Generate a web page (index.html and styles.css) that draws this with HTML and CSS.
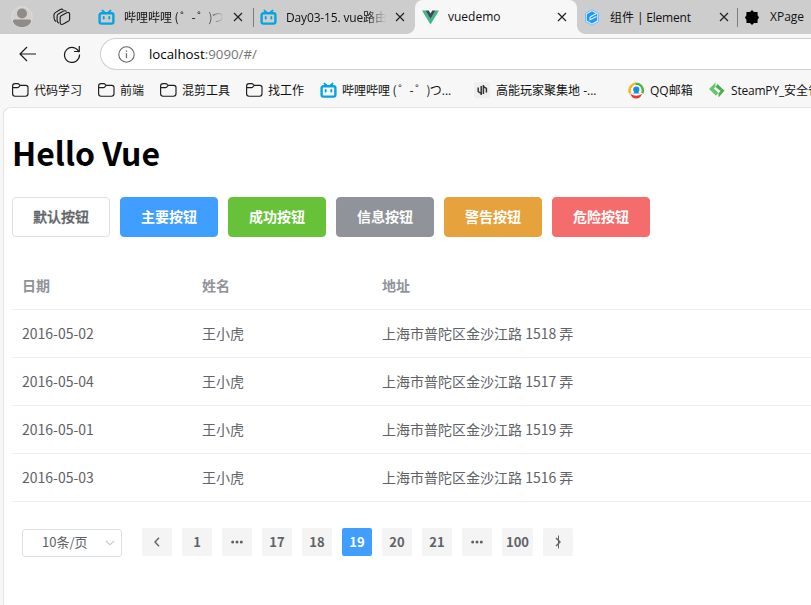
FILE: index.html
```html
<!DOCTYPE html>
<html lang="zh-CN">
<head>
<meta charset="utf-8">
<title>vuedemo</title>
<link rel="stylesheet" href="styles.css">
</head>
<body>
<svg width="0" height="0" class="defs">
  <symbol id="bili" viewBox="0 0 17 17"><path d="M4.500 1.600 6.500 3.500M12.500 1.600 10.500 3.500" stroke="#06a4de" stroke-width="2" stroke-linecap="round"/><rect x="1.600" y="4.200" width="13.800" height="10.400" rx="1.800" fill="none" stroke="#06a4de" stroke-width="2.400"/><path d="M5.700 8v1.500M11.300 8v1.500" stroke="#06a4de" stroke-width="1.900" stroke-linecap="round"/></symbol>
  <symbol id="close" viewBox="0 0 10 10"><path d="M1 1l8 8M9 1L1 9" stroke="#222" stroke-width="1.200" fill="none"/></symbol>
  <symbol id="folder" viewBox="0 0 17 16"><path d="M.6 4.200q0-2.600 2.400-2.600h2.600q1 0 1.600.7l1 1h5.600q2.200 0 2.200 2.200v6.300q0 2.400-2.400 2.400H3Q.6 14.200.6 11.800zM.6 5.600h4.800q.9 0 1.500-.8l1.300-1.500" fill="none" stroke="#1d1d1d" stroke-width="1.150"/></symbol>
</svg>
<header class="browser">
  <div class="tabs">
    <div class="lead">
      <svg class="avatar" width="22" height="22" viewBox="0 0 22 22"><circle cx="11" cy="11" r="10.300" fill="#d3d1cf" stroke="#dedcda"/><circle cx="11" cy="7.500" r="5" fill="#8f8b88"/><path d="M1.800 15.500q0-2 2-2h14.400q2 0 2 2a10.300 10.300 0 0 1-18.400 0z" fill="#8f8b88"/></svg>
      <svg class="work" width="18" height="18" viewBox="0 0 18 18"><g fill="#cdcdcd" stroke="#1b1b1b" stroke-width="1.100" stroke-linejoin="round"><path d="M3.300 13.500Q1.300 12.500 1.100 10.500L.9 7.200Q.9 5.500 2.300 4.600L7.300 1.500Q9 .7 10.300 1.600" fill="none"/><path d="M6 15.300Q4.200 14.300 4.100 12.500V8.200Q4.100 6.800 5.300 6L10.500 3.100Q12.300 2.300 13.600 3.400" fill="none"/><path d="M7.200 9.300q0-1 1-1.600l5.500-2.900q2.800-1 2.900 1.300v5.200q0 1.200-1 1.800l-5.300 3q-3 1.200-3.100-1.400z"/></g></svg>
    </div>
    <div class="tab"><svg class="fav" width="17" height="17"><use href="#bili"/></svg><span class="t fade">哔哩哔哩<span class="face"> ( ゜- ゜)</span>つ</span><svg class="x" width="10" height="10"><use href="#close"/></svg></div>
    <div class="tab line"><svg class="fav" width="17" height="17"><use href="#bili"/></svg><span class="t fade"><span class="lat day">Day03-15. vue</span>路由</span><svg class="x" width="10" height="10"><use href="#close"/></svg></div>
    <div class="tab active"><svg class="fav" width="17" height="17" viewBox="0 0 17 17"><path d="M0 1.500h3.500l5 8.500 5-8.500H17L8.500 15.500z" fill="#41b883"/><path d="M3.500 1.500h3.200l1.800 3 1.800-3h3.200l-5 8.500z" fill="#35495e"/></svg><span class="t lat">vuedemo</span><svg class="x" width="10" height="10"><use href="#close"/></svg></div>
    <div class="tab"><svg class="fav" width="17" height="17" viewBox="0 0 17 17"><path d="M8 .8l6.500 3.700v8L8 16.200l-6.500-3.700v-8z" fill="#e3f3ff" stroke="#58b5ff" stroke-width=".8"/><path d="M8 2.300l5.200 3v6.200L8 14.500l-5.200-3V5.300z" fill="#2096f8"/><path d="M6 8l6.500-3.400M6 8v2.800l6.500-3.400" stroke="#e3f3ff" stroke-width="1.100" fill="none"/></svg><span class="t">组件<span class="lat tight"> | Element</span></span><svg class="x" width="10" height="10"><use href="#close"/></svg></div>
    <div class="tab line last"><svg class="fav" width="17" height="17" viewBox="0 0 17 17"><path d="M7 1l2 2h3.500l.1 3.300L14 8.500l-1.400 2.200-.1 3.300H9l-2 2-2-2H1.500l-.1-3.300L0 8.500l1.400-2.200L1.500 3H5z" fill="#000"/></svg><span class="t lat">XPage</span></div>
  </div>
  <div class="nav">
    <svg class="back" width="18" height="16" viewBox="0 0 18 16"><path d="M8 1L1 8l7 7M1 8h16" fill="none" stroke="#1b1b1b" stroke-width="1.200"/></svg>
    <svg class="reload" width="18" height="18" viewBox="0 0 18 18"><path d="M16 7.200A7.500 7.500 0 1 0 16.500 9.500M16.300 1v5.500H11" fill="none" stroke="#1b1b1b" stroke-width="1.200"/></svg>
    <div class="address"><svg width="17" height="17" viewBox="0 0 17 17"><circle cx="8.500" cy="8.500" r="7.700" fill="none" stroke="#666" stroke-width="1.100"/><path d="M8.500 7.300v5M8.500 4.500v1.300" stroke="#666" stroke-width="1.200"/></svg><span class="url">localhost<span class="dim">:9090/#/</span></span></div>
  </div>
  <nav class="marks">
    <a class="w70"><svg width="17" height="16"><use href="#folder"/></svg>代码学习</a>
    <a class="w46"><svg width="17" height="16"><use href="#folder"/></svg>前端</a>
    <a class="w70"><svg width="17" height="16"><use href="#folder"/></svg>混剪工具</a>
    <a class="w58"><svg width="17" height="16"><use href="#folder"/></svg>找工作</a>
    <a class="w138"><svg width="17" height="17"><use href="#bili"/></svg><span>哔哩哔哩<span class="face"> ( ゜- ゜)</span>つ<span class="lat">...</span></span></a>
    <a class="w138"><svg width="17" height="16" viewBox="0 0 17 16"><rect width="16" height="16" rx="3" fill="#efefef"/><path d="M7.200 4v9M7.200 11.500L4.200 9.500V5.500M9.400 12V3M9.400 4.500l3 2v4" fill="none" stroke="#333" stroke-width="1.500"/></svg><span>高能玩家聚集地<span class="lat"> -...</span></span></a>
    <a class="w65"><svg width="17" height="17" viewBox="0 0 17 17"><path d="M2.200 11.500A7 7 0 0 1 7.500 1.700" fill="none" stroke="#f8b51c" stroke-width="2.600"/><path d="M7.500 1.700a7 7 0 0 1 6.800 9.500" fill="none" stroke="#57b33b" stroke-width="2.600"/><path d="M2.200 11.700q6 4 12 0l-2 3.500q-4 2.400-8 0z" fill="#e83a22"/><circle cx="8.300" cy="8" r="5" fill="#fff"/><circle cx="8.300" cy="7.600" r="3.100" fill="#168ce0"/><path d="M4.800 11.500q3.500-4 7 0z" fill="#168ce0"/></svg><span><span class="lat">QQ</span>邮箱</span></a>
    <a><svg width="17" height="16" viewBox="0 0 17 16"><path d="M6.500.5v4.300L4.800 6.600l4.700 4.300-2.500 2.800L0 7z" fill="#6bc46d"/><path d="M8.500 2L15.500 8.800 9.500 15.500v-4.200l2-2.200L6.500 5z" fill="#4cae50"/></svg><span><span class="lat tight">SteamPY_</span>安全省</span></a>
  </nav>
</header>
<main class="page">
  <h1>Hello Vue</h1>
  <div class="buttons">
    <button class="btn">默认按钮</button>
    <button class="btn primary">主要按钮</button>
    <button class="btn success">成功按钮</button>
    <button class="btn info">信息按钮</button>
    <button class="btn warning">警告按钮</button>
    <button class="btn danger">危险按钮</button>
  </div>
  <div class="table">
    <div class="row head"><span>日期</span><span>姓名</span><span>地址</span></div>
    <div class="row"><span>2016-05-02</span><span>王小虎</span><span>上海市普陀区金沙江路 1518 弄</span></div>
    <div class="row"><span>2016-05-04</span><span>王小虎</span><span>上海市普陀区金沙江路 1517 弄</span></div>
    <div class="row"><span>2016-05-01</span><span>王小虎</span><span>上海市普陀区金沙江路 1519 弄</span></div>
    <div class="row"><span>2016-05-03</span><span>王小虎</span><span>上海市普陀区金沙江路 1516 弄</span></div>
  </div>
  <div class="pager">
    <div class="size"><span>10条/页</span><svg width="10" height="6" viewBox="0 0 10 6"><path d="M1 .8l4 4 4-4" fill="none" stroke="#c0c4cc" stroke-width="1.100"/></svg></div>
    <div class="p"><svg width="8" height="10" viewBox="0 0 8 10"><path d="M6 .8L2 5l4 4.200" fill="none" stroke="#606266" stroke-width="1.400"/></svg></div>
    <div class="p">1</div>
    <div class="p"><svg width="14" height="4" viewBox="0 0 14 4"><g fill="#606266"><circle cx="2.700" cy="2" r="1.500"/><circle cx="7" cy="2" r="1.500"/><circle cx="11.300" cy="2" r="1.500"/></g></svg></div>
    <div class="p">17</div>
    <div class="p">18</div>
    <div class="p on">19</div>
    <div class="p">20</div>
    <div class="p">21</div>
    <div class="p"><svg width="14" height="4" viewBox="0 0 14 4"><g fill="#606266"><circle cx="2.700" cy="2" r="1.500"/><circle cx="7" cy="2" r="1.500"/><circle cx="11.300" cy="2" r="1.500"/></g></svg></div>
    <div class="p wide">100</div>
    <div class="p"><svg width="8" height="14" viewBox="0 0 8 14"><path d="M2 3l4 4-4 4" fill="none" stroke="#606266" stroke-width="1.400"/><path d="M4.500.5v13" stroke="#606266" stroke-width="1" fill="none"/></svg></div>
  </div>
</main>
</body>
</html>
```
FILE: styles.css
```css
* { box-sizing: border-box; }
body {
  margin: 0;
  width: 811px;
  height: 605px;
  overflow: hidden;
  background: #f7f7f7;
  font-family: "Noto Sans CJK SC", sans-serif;
}
svg { flex: none; display: block; }
.defs { position: absolute; }
.lat { font-family: "Open Sans", sans-serif; }
.tight { letter-spacing: -0.2px; }
.day { letter-spacing: -0.15px; }
.face { letter-spacing: -0.8px; word-spacing: 0.6px; }
.browser { height: 108px; color: #111; font-size: 12px; overflow: hidden; }
.tabs { display: flex; height: 34px; background: #cdcdcd; overflow: hidden; }
.lead { width: 91px; flex: none; display: flex; align-items: center; padding-left: 11px; }
.work { margin-left: 20px; }
.tab { width: 162px; flex: none; display: flex; align-items: center; padding-left: 7px; position: relative; }
.tab.last { width: 74px; padding-left: 6px; }
.tab .t { margin-left: 9px; width: 100px; overflow: hidden; white-space: pre; line-height: 20px; }
.tab .x { margin-left: 9px; }
.tab.last .t { width: 41px; margin-left: 8px; }
.fade { -webkit-mask-image: linear-gradient(to right, #000 80%, transparent); mask-image: linear-gradient(to right, #000 80%, transparent); }
.line::before { content: ""; position: absolute; left: 0; top: 8px; width: 1px; height: 19px; background: #7c7c7c; }
.last::before { left: -2px; }
.active { background: #f7f7f7; border-radius: 8px 8px 0 0; }
.active::before, .active::after { content: ""; position: absolute; bottom: 0; width: 8px; height: 8px; }
.active::before { left: -8px; background: radial-gradient(circle at 0 0, transparent 7.5px, #f7f7f7 8px); }
.active::after { right: -8px; background: radial-gradient(circle at 100% 0, transparent 7.5px, #f7f7f7 8px); }
.nav { display: flex; align-items: center; height: 40px; padding-left: 19px; }
.reload { margin-left: 26px; }
.address {
  display: flex; align-items: center; flex: 1; margin-left: 19px; height: 32px;
  padding-left: 17px; border: 1px solid #cfcfcf; border-right: 0;
  border-radius: 16px 0 0 16px; background: #fff;
}
.url { margin-left: 14px; font: 13.3px/20px "Open Sans", sans-serif; color: #000; }
.dim { color: #757575; }
.marks { display: flex; gap: 16px; padding-left: 12px; height: 32px; align-items: center; white-space: pre; }
.marks a { display: flex; align-items: center; gap: 5px; flex: none; line-height: 20px; }
.w46 { width: 46px; }
.w58 { width: 58px; }
.w65 { width: 65px; }
.w70 { width: 70px; }
.w138 { width: 138px; }
.page {
  margin-left: 3px; height: 498px; margin-top: -1px; padding: 0 0 0 8px; background: #fff;
  border: 1px solid #e4e4e4; border-width: 1px 0 0 1px; border-radius: 8px 0 0 0;
  position: relative;
}
h1 { margin: 20px 0 0; font-size: 32px; line-height: 48px; color: #000; }
.buttons { display: flex; gap: 10px; margin-top: 21px; }
.btn {
  width: 98px; height: 40px; padding: 0 0 2px; border: 1px solid #dcdfe6; border-radius: 4px;
  background: #fff; color: #606266; font: 500 14px/14px "Noto Sans CJK SC", sans-serif;
  -webkit-text-stroke: 0.3px currentColor;
}
.primary, .success, .info, .warning, .danger { color: #fff; font-weight: 700; -webkit-text-stroke: 0; }
.primary { background: #409eff; border-color: #409eff; }
.success { background: #67c23a; border-color: #67c23a; }
.info { background: #909399; border-color: #909399; }
.warning { background: #e6a23c; border-color: #e6a23c; }
.danger { background: #f56c6c; border-color: #f56c6c; }
.table { margin-top: 25px; font-size: 14px; color: #606266; }
.row { display: grid; grid-template-columns: 180px 180px 1fr; height: 48px; align-items: center; border-bottom: 1px solid #ebeef5; }
.row span { padding-left: 10px; line-height: 23px; }
.head { color: #909399; font-weight: 700; }
.pager { display: flex; gap: 10px; margin: 26px 0 0 10px; color: #606266; font-size: 13px; }
.size {
  width: 100px; height: 28px; margin: 1px 10px 0 0; border: 1px solid #dcdfe6; border-radius: 3px;
  display: flex; align-items: center; padding-left: 19px; line-height: 24px;
}
.size span { width: 63px; padding-bottom: 2px; }
.p { width: 30px; height: 28px; padding-bottom: 1px; line-height: 19px; display: flex; align-items: center; justify-content: center; background: #f4f4f5; border-radius: 2px; font-weight: 700; }
.wide { width: 31px; }
.on { background: #409eff; color: #fff; }
```
